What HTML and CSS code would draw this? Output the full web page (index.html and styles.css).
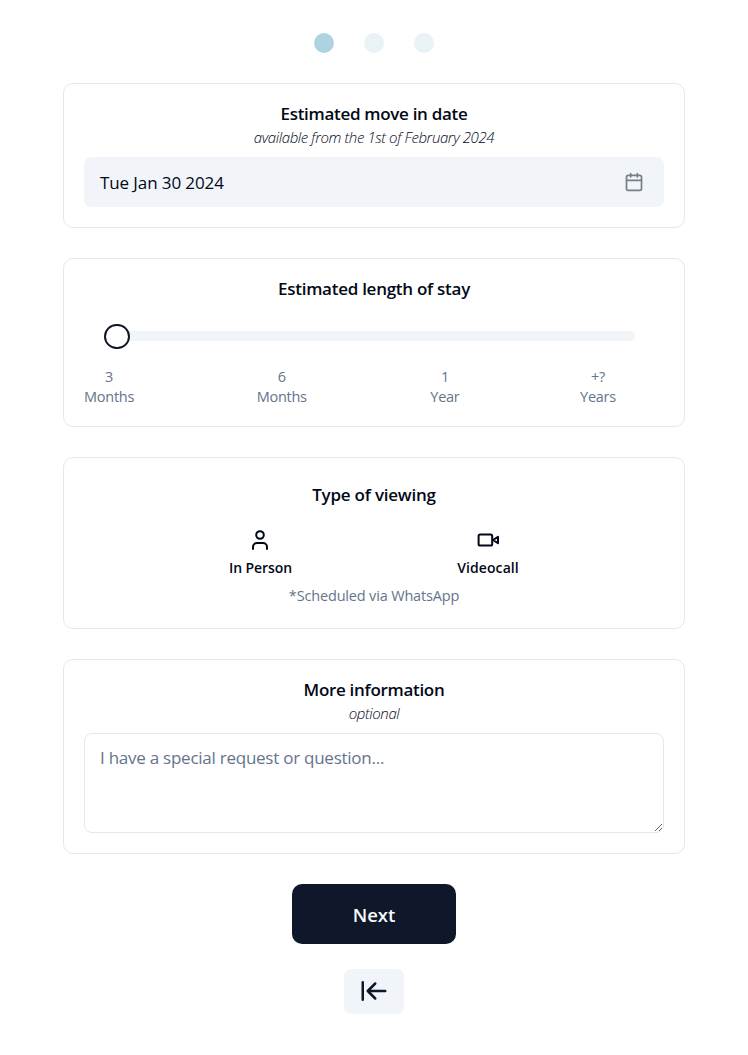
FILE: index.html
```html
<!DOCTYPE html>
<html lang="en">
<head>
<meta charset="utf-8">
<title>Viewing request</title>
<link rel="stylesheet" href="styles.css">
</head>
<body>
<main class="page">
  <div class="steps"><span class="step step-active"></span><span class="step"></span><span class="step"></span></div>

  <section class="card card-date">
    <h2 class="title title-date">Estimated move in date</h2>
    <p class="hint">available from the 1st of February 2024</p>
    <button class="date-field" type="button">
      <span class="date-value">Tue Jan 30 2024</span>
      <svg class="icon calendar" viewBox="0 0 24 24"><rect x="3" y="4" width="18" height="18" rx="2"/><path d="M16 2v4M8 2v4M3 10h18"/></svg>
    </button>
  </section>

  <section class="card card-stay">
    <h2 class="title title-stay">Estimated length of stay</h2>
    <div class="slider"><span class="thumb"></span></div>
    <div class="marks">
      <div class="mark">3<br>Months</div>
      <div class="mark mark-half">6<br>Months</div>
      <div class="mark mark-year">1<br>Year</div>
      <div class="mark">+?<br>Years</div>
    </div>
  </section>

  <section class="card card-viewing">
    <h2 class="title title-viewing">Type of viewing</h2>
    <div class="options">
      <div class="option">
        <svg class="icon option-icon" viewBox="0 0 24 24"><path d="M19 21v-2a4 4 0 0 0-4-4H9a4 4 0 0 0-4 4v2"/><circle cx="12" cy="7" r="3.8"/></svg>
        <span class="option-label in-person">In Person</span>
      </div>
      <div class="option">
        <svg class="icon option-icon" viewBox="0 0 24 24"><path d="m22 8.8-5 3.2 5 3.2V8.8Z"/><rect x="2.6" y="6.4" width="13.6" height="11.2" rx="1.6"/></svg>
        <span class="option-label videocall">Videocall</span>
      </div>
    </div>
    <p class="note">*Scheduled via WhatsApp</p>
  </section>

  <section class="card card-info">
    <h2 class="title title-info">More information</h2>
    <p class="hint hint-optional">optional</p>
    <textarea class="message" placeholder="I have a special request or question..."></textarea>
  </section>

  <button class="next" type="button">Next</button>
  <button class="back" type="button" aria-label="Back">
    <svg class="icon back-icon" viewBox="0 0 24 24"><path d="M3 19V5M13 6l-6 6 6 6M7 12h14"/></svg>
  </button>
</main>
</body>
</html>
```
FILE: styles.css
```css
* { box-sizing: border-box; }

body {
  margin: 0;
  background: #fff;
  color: #020817;
  font-family: "Segoe UI", "Open Sans", "Noto Sans", sans-serif;
}

.page {
  display: flex;
  flex-direction: column;
  align-items: center;
  width: 622px;
  margin: 0 auto;
  padding-top: 33px;
}

.steps { display: flex; gap: 30px; margin-bottom: 30px; }
.step { width: 20px; height: 20px; border-radius: 50%; background: #e9f3f6; }
.step-active { background: #add3e1; }

.card {
  display: flex;
  flex-direction: column;
  width: 100%;
  margin-bottom: 30px;
  padding: 0 20px;
  border: 1px solid #e2e8f0;
  border-radius: 10px;
  text-align: center;
}
.card-date { height: 145px; padding-top: 17px; }
.card-stay { height: 169px; padding-top: 17px; }
.card-viewing { height: 172px; padding-top: 24px; }
.card-info { height: 195px; padding-top: 17px; }

.title { margin: 0; font-size: 17px; line-height: 26px; font-weight: 600; letter-spacing: -0.3px; }
.title-stay { letter-spacing: -0.27px; }
.title-viewing { letter-spacing: -0.22px; }
.hint { margin: 0; font-size: 15px; line-height: 20px; font-style: italic; font-weight: 300; letter-spacing: -0.4px; }

.icon { fill: none; stroke: currentColor; stroke-width: 2; stroke-linecap: round; stroke-linejoin: round; }

.date-field {
  display: flex;
  align-items: center;
  justify-content: space-between;
  height: 50px;
  margin-top: 10px;
  padding: 0 20px 0 16px;
  border: 0;
  border-radius: 7px;
  background: #f1f5f9;
  color: #020817;
  font-family: inherit;
  font-size: 17px;
  letter-spacing: -0.1px;
}
.calendar { width: 20px; height: 20px; opacity: .5; }

.slider { display: flex; align-items: center; height: 10px; margin: 29px 29px 0 20px; border-radius: 5px; background: #f1f5f9; }
.thumb { width: 25.5px; height: 25.5px; margin: 1px 0 0 0.3px; border: 2px solid #0f172a; border-radius: 50%; background: #fff; }

.marks { display: flex; justify-content: space-between; margin-top: 26px; padding-right: 48px; }
.mark { font-size: 14.5px; line-height: 20px; color: #64748b; letter-spacing: -0.25px; }
.mark-half { padding-left: 2px; }
.mark-year { padding-left: 3px; }

.options { display: flex; justify-content: center; margin-top: 20px; }
.option { display: flex; flex-direction: column; align-items: center; width: 228px; }
.option-icon { width: 24px; height: 24px; }
.option-label { margin-top: 4px; font-size: 14px; line-height: 24px; font-weight: 600; }
.in-person { padding-left: 1px; letter-spacing: -0.1px; }
.videocall { letter-spacing: 0.1px; }
.note { margin: 5px 0 0; font-size: 14.5px; line-height: 22px; color: #64748b; letter-spacing: -0.17px; }

.message {
  height: 100px;
  margin: 10px 0 0;
  padding: 10px 15px;
  border: 1px solid #e2e8f0;
  border-radius: 8px;
  outline: 0;
  background: #fff;
  font-family: inherit;
  font-size: 17px;
  line-height: 28px;
  letter-spacing: -0.25px;
  resize: vertical;
}
.message::placeholder { color: #64748b; }

.next {
  width: 164px;
  height: 60px;
  padding: 0;
  border: 0;
  border-radius: 10px;
  background: #0f172a;
  color: #f8fafc;
  font-family: inherit;
  font-size: 18.5px;
  font-weight: 600;
}
.back {
  display: flex;
  align-items: center;
  justify-content: center;
  width: 60px;
  height: 45px;
  margin-top: 25px;
  padding: 0 0 1px;
  border: 0;
  border-radius: 7px;
  background: #f1f5f9;
  color: #0f172a;
}
.back-icon { width: 30px; height: 30px; }
```
